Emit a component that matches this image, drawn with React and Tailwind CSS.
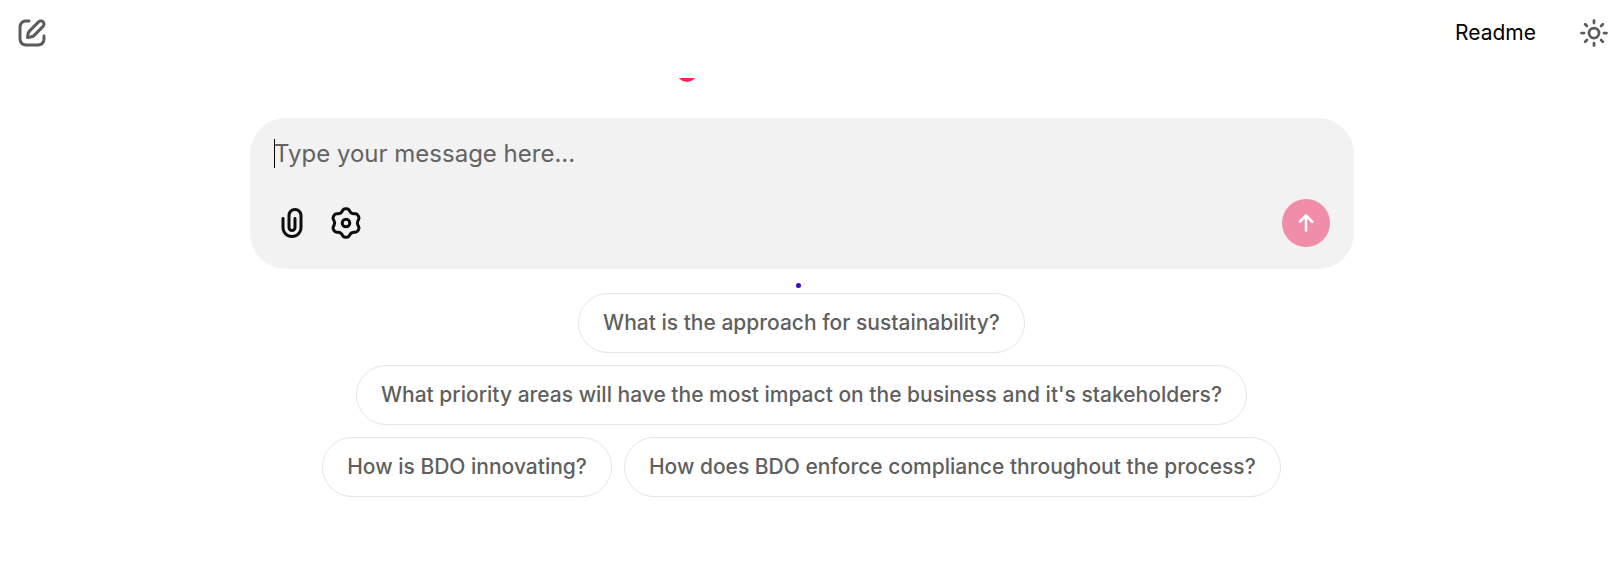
import React from "react";
import { Sun } from "lucide-react";

const EditSquare = () => (
  <svg viewBox="0 0 24 24" fill="currentColor" className="size-9 shrink-0">
    <path
      fillRule="evenodd"
      clipRule="evenodd"
      d="M15.6729 3.91287C16.8918 2.69392 18.8682 2.69392 20.0871 3.91287C21.3061 5.13182 21.3061 7.10813 20.0871 8.32708L14.1499 14.2643C13.3849 15.0293 12.3925 15.5255 11.3215 15.6785L9.14142 15.9899C8.82983 16.0344 8.51546 15.9297 8.29289 15.7071C8.07033 15.4845 7.96554 15.1701 8.01005 14.8586L8.32149 12.6785C8.47449 11.6075 8.97072 10.615 9.7357 9.85006L15.6729 3.91287ZM18.6729 5.32708C18.235 4.88918 17.525 4.88918 17.0871 5.32708L11.1499 11.2643C10.6909 11.7233 10.3932 12.3187 10.3014 12.9613L10.1785 13.8215L11.0386 13.6986C11.6812 13.6068 12.2767 13.3091 12.7357 12.8501L18.6729 6.91287C19.1108 6.47497 19.1108 5.76499 18.6729 5.32708ZM11 3.99929C11.0004 4.55157 10.5531 4.99963 10.0008 5.00007C9.00227 5.00084 8.29769 5.00827 7.74651 5.06064C7.20685 5.11191 6.88488 5.20117 6.63803 5.32695C6.07354 5.61457 5.6146 6.07351 5.32698 6.63799C5.19279 6.90135 5.10062 7.24904 5.05118 7.8542C5.00078 8.47105 5 9.26336 5 10.4V13.6C5 14.7366 5.00078 15.5289 5.05118 16.1457C5.10062 16.7509 5.19279 17.0986 5.32698 17.3619C5.6146 17.9264 6.07354 18.3854 6.63803 18.673C6.90138 18.8072 7.24907 18.8993 7.85424 18.9488C8.47108 18.9992 9.26339 19 10.4 19H13.6C14.7366 19 15.5289 18.9992 16.1458 18.9488C16.7509 18.8993 17.0986 18.8072 17.362 18.673C17.9265 18.3854 18.3854 17.9264 18.673 17.3619C18.7988 17.1151 18.8881 16.7931 18.9393 16.2535C18.9917 15.7023 18.9991 14.9977 18.9999 13.9992C19.0003 13.4469 19.4484 12.9995 20.0007 13C20.553 13.0004 21.0003 13.4485 20.9999 14.0007C20.9991 14.9789 20.9932 15.7808 20.9304 16.4426C20.8664 17.116 20.7385 17.7136 20.455 18.2699C19.9757 19.2107 19.2108 19.9756 18.27 20.455C17.6777 20.7568 17.0375 20.8826 16.3086 20.9421C15.6008 21 14.7266 21 13.6428 21H10.3572C9.27339 21 8.39925 21 7.69138 20.9421C6.96253 20.8826 6.32234 20.7568 5.73005 20.455C4.78924 19.9756 4.02433 19.2107 3.54497 18.2699C3.24318 17.6776 3.11737 17.0374 3.05782 16.3086C2.99998 15.6007 2.99999 14.7266 3 13.6428V10.3572C2.99999 9.27337 2.99998 8.39922 3.05782 7.69134C3.11737 6.96249 3.24318 6.3223 3.54497 5.73001C4.02433 4.7892 4.78924 4.0243 5.73005 3.54493C6.28633 3.26149 6.88399 3.13358 7.55735 3.06961C8.21919 3.00673 9.02103 3.00083 9.99922 3.00007C10.5515 2.99964 10.9996 3.44736 11 3.99929Z"
    />
  </svg>
);

const PaperClip = () => (
  <svg viewBox="0 0 24 24" fill="currentColor" className="size-9">
    <path
      fillRule="evenodd"
      clipRule="evenodd"
      d="M9 7C9 4.23858 11.2386 2 14 2C16.7614 2 19 4.23858 19 7V15C19 18.866 15.866 22 12 22C8.13401 22 5 18.866 5 15V9C5 8.44772 5.44772 8 6 8C6.55228 8 7 8.44772 7 9V15C7 17.7614 9.23858 20 12 20C14.7614 20 17 17.7614 17 15V7C17 5.34315 15.6569 4 14 4C12.3431 4 11 5.34315 11 7V15C11 15.5523 11.4477 16 12 16C12.5523 16 13 15.5523 13 15V9C13 8.44772 13.4477 8 14 8C14.5523 8 15 8.44772 15 9V15C15 16.6569 13.6569 18 12 18C10.3431 18 9 16.6569 9 15V7Z"
    />
  </svg>
);

const Gear = () => (
  <svg viewBox="0.6 0.6 22.8 22.8" fill="none" stroke="currentColor" strokeWidth="1.9" className="size-9">
    <path d="M11.6439 3C10.9352 3 10.2794 3.37508 9.92002 3.98596L9.49644 4.70605C8.96184 5.61487 7.98938 6.17632 6.93501 6.18489L6.09967 6.19168C5.39096 6.19744 4.73823 6.57783 4.38386 7.19161L4.02776 7.80841C3.67339 8.42219 3.67032 9.17767 4.01969 9.7943L4.43151 10.5212C4.95127 11.4386 4.95127 12.5615 4.43151 13.4788L4.01969 14.2057C3.67032 14.8224 3.67339 15.5778 4.02776 16.1916L4.38386 16.8084C4.73823 17.4222 5.39096 17.8026 6.09966 17.8083L6.93502 17.8151C7.98939 17.8237 8.96185 18.3851 9.49645 19.294L9.92002 20.0141C10.2794 20.6249 10.9352 21 11.6439 21H12.3561C13.0648 21 13.7206 20.6249 14.08 20.0141L14.5035 19.294C15.0381 18.3851 16.0106 17.8237 17.065 17.8151L17.9004 17.8083C18.6091 17.8026 19.2618 17.4222 19.6162 16.8084L19.9723 16.1916C20.3267 15.5778 20.3298 14.8224 19.9804 14.2057L19.5686 13.4788C19.0488 12.5615 19.0488 11.4386 19.5686 10.5212L19.9804 9.7943C20.3298 9.17767 20.3267 8.42219 19.9723 7.80841L19.6162 7.19161C19.2618 6.57783 18.6091 6.19744 17.9004 6.19168L17.065 6.18489C16.0106 6.17632 15.0382 5.61487 14.5036 4.70605L14.08 3.98596C13.7206 3.37508 13.0648 3 12.3561 3H11.6439Z" />
    <circle cx="12" cy="12" r="2.4" />
  </svg>
);

const ArrowUp = () => (
  <svg
    viewBox="0 0 24 24"
    fill="none"
    stroke="currentColor"
    strokeWidth="2"
    strokeLinecap="round"
    strokeLinejoin="round"
    className="size-[30px]"
  >
    <path d="M7 11L12 6L17 11M12 18V7" />
  </svg>
);

const starterRows = [
  ["What is the approach for sustainability?"],
  ["What priority areas will have the most impact on the business and it's stakeholders?"],
  ["How is BDO innovating?", "How does BDO enforce compliance throughout the process?"],
];

export default function App() {
  return (
    <div className="flex h-[583px] w-[1609px] flex-col overflow-hidden bg-white font-['Inter',sans-serif]">
      <header className="flex h-[78px] shrink-0 items-start justify-between pl-3.5">
        <button className="mt-[15px] text-[#5c5c5c]">
          <EditSquare />
        </button>
        <div className="flex h-[66px] items-center">
          <span className="text-[21px] leading-[30px] text-black">Readme</span>
          <Sun className="ml-[43px] size-[30px] text-[#5c5c5c]" strokeWidth={2.2} />
        </div>
      </header>

      <main className="flex w-[1604px] flex-col items-center">
        {/* Lower edge of the logo, clipped by the scroll area */}
        <div className="flex h-10 w-full pl-[678px]">
          <svg viewBox="0 0 18 4" className="h-1 w-[18px]">
            <circle cx="9" cy="-6.2" r="10.2" fill="#f92656" />
          </svg>
        </div>

        <section className="flex h-[151px] w-[1104px] flex-col rounded-[36px] bg-[#f2f2f2] px-6 pt-[18px]">
          <div className="flex h-9 items-center">
            <span className="relative mb-px -mr-px h-[29px] w-px bg-black" />
            <span className="text-2xl leading-9 text-[#636363]">Type your message here...</span>
          </div>
          <div className="mt-[27px] flex h-12 items-center justify-between">
            <div className="flex gap-[18px] text-[#0d0d0d]">
              <button>
                <PaperClip />
              </button>
              <button>
                <Gear />
              </button>
            </div>
            <button className="flex size-12 items-center justify-center rounded-full bg-[#f08ea9] text-white">
              <ArrowUp />
            </button>
          </div>
        </section>

        <div className="flex h-6 w-full pl-[796px] pt-[14px]">
          <span className="size-[5px] rounded-full bg-[#3a08c0]" />
        </div>

        <div className="flex flex-col items-center gap-3 pr-px">
          {starterRows.map((row) => (
            <div key={row[0]} className="flex gap-3">
              {row.map((label) => (
                <button
                  key={label}
                  className="h-[60px] whitespace-nowrap rounded-full border border-[#e5e5e5] px-6 text-[21px] leading-[30px] font-medium text-[#5f5f5f]"
                >
                  {label}
                </button>
              ))}
            </div>
          ))}
        </div>
      </main>
    </div>
  );
}
